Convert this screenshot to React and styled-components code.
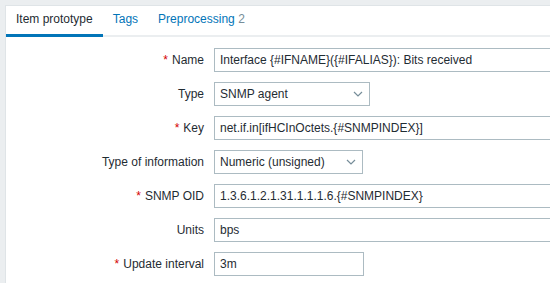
import React from 'react'
import styled, { createGlobalStyle } from 'styled-components'

const GlobalStyle = createGlobalStyle`
    html, body {
        margin: 0;
        padding: 0;
        background: #ebeef0;
        overflow: hidden;
    }
    body {
        font-family: "Liberation Sans", Arial, sans-serif;
        font-size: 12px;
        color: #1f2c33;
    }
`

const fields = [
    { label: 'Name', required: true, value: 'Interface {#IFNAME}({#IFALIAS}): Bits received' },
    { label: 'Type', select: true, width: 156, value: 'SNMP agent' },
    { label: 'Key', required: true, value: 'net.if.in[ifHCInOctets.{#SNMPINDEX}]' },
    { label: 'Type of information', select: true, width: 149, value: 'Numeric (unsigned)' },
    { label: 'SNMP OID', required: true, value: '1.3.6.1.2.1.31.1.1.1.6.{#SNMPINDEX}' },
    { label: 'Units', value: 'bps' },
    { label: 'Update interval', required: true, width: 150, value: '3m' },
]

const Chevron = () => (
    <svg width="10" height="6" viewBox="0 0 10 6">
        <path d="M1 1 L5 5 L9 1" fill="none" stroke="#768d99" strokeWidth="1.2" />
    </svg>
)

const App = () => {
    return (
        <Page>
            <GlobalStyle />
            <Panel>
                <TabBar>
                    <Tab active>Item prototype</Tab>
                    <Tab>Tags</Tab>
                    <Tab>Preprocessing <Count>2</Count></Tab>
                </TabBar>
                <Form>
                    {fields.map(f => (
                        <React.Fragment key={f.label}>
                            <Label>
                                {f.required && <Star>*</Star>}
                                {f.label}
                            </Label>
                            {f.select ? (
                                <Select width={f.width}>
                                    <span>{f.value}</span>
                                    <Chevron />
                                </Select>
                            ) : (
                                <Input width={f.width}>{f.value}</Input>
                            )}
                        </React.Fragment>
                    ))}
                </Form>
            </Panel>
        </Page>
    )
}

const Page = styled.div`
    width: 550px;
    height: 283px;
    padding: 5px 0 0 5px;
    box-sizing: border-box;
    display: flex;
    overflow: hidden;
`

const Panel = styled.div`
    flex: 1;
    min-width: 0;
    background: #ffffff;
    border-left: 1px solid #dfe4e7;
    border-top: 1px solid #dfe4e7;
    overflow: hidden;
`

const TabBar = styled.div`
    display: flex;
    border-bottom: 2px solid #ebeef0;
    height: 29px;
`

const Tab = styled.div`
    padding: 0 10px;
    height: 31px;
    line-height: 27px;
    box-sizing: border-box;
    margin-bottom: -2px;
    white-space: nowrap;
    color: ${({ active }) => (active ? '#1f2c33' : '#0275b8')};
    border-bottom: 3px solid ${({ active }) => (active ? '#0275b8' : 'transparent')};
`

const Count = styled.span`
    color: #768d99;
`

const Form = styled.div`
    display: grid;
    grid-template-columns: 198px auto;
    column-gap: 10px;
    row-gap: 10px;
    align-items: center;
    padding-top: 11px;
`

const Label = styled.div`
    text-align: right;
    white-space: nowrap;
`

const Star = styled.span`
    color: #d40000;
    margin-right: 4px;
`

const Input = styled.div`
    width: ${({ width }) => (width ? `${width}px` : '453px')};
    height: 24px;
    box-sizing: border-box;
    border: 1px solid #acbbc2;
    padding: 0 5px;
    line-height: 22px;
    white-space: nowrap;
    justify-self: start;
`

const Select = styled.div`
    width: ${({ width }) => width}px;
    height: 24px;
    box-sizing: border-box;
    border: 1px solid #acbbc2;
    padding: 0 6px 0 5px;
    display: flex;
    align-items: center;
    justify-content: space-between;
    white-space: nowrap;
    justify-self: start;
`

export default App
